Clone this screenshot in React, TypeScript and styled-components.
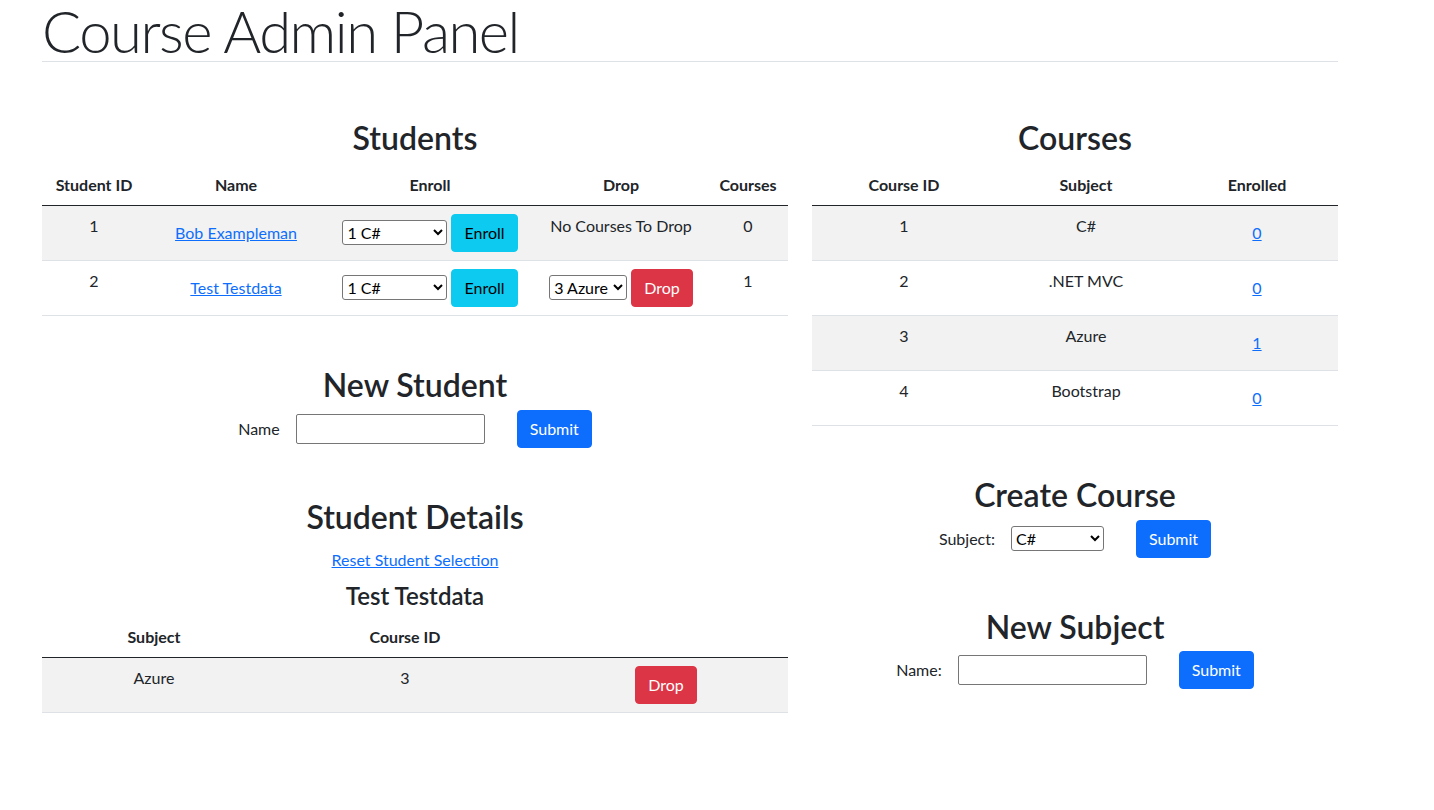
import React from "react";
import styled, { createGlobalStyle } from "styled-components";

const FONT = `Lato, "Open Sans", "Liberation Sans", sans-serif`;

const GlobalStyle = createGlobalStyle`
  * { box-sizing: border-box; }
  body {
    margin: 0;
    font-family: ${FONT};
    font-size: 16px;
    line-height: 1.5;
    color: #212529;
    background: #fff;
  }
`;

const Page = styled.div`
  width: 1296px;
  margin-left: 42px;
`;

const Title = styled.h1`
  margin: 0;
  font-size: 58px;
  font-weight: 300;
  letter-spacing: -1.5px;
  line-height: 61px;
  border-bottom: 1px solid #dee2e6;
`;

const Columns = styled.div`
  display: grid;
  grid-template-columns: 746px 526px;
  column-gap: 24px;
  margin-top: 57px;
`;

const Column = styled.div`
  display: flex;
  flex-direction: column;
  gap: 50px;
`;

const Section = styled.section`
  text-align: center;
`;

const Heading = styled.h2<{ $tight?: boolean }>`
  margin: 0 0 ${(p) => (p.$tight ? 5 : 8)}px;
  font-size: 32px;
  font-weight: 600;
  line-height: 38.4px;
`;

const SubHeading = styled.h4`
  margin: 3px 0 6px;
  font-size: 24px;
  font-weight: 600;
  line-height: 28.8px;
`;

const Table = styled.table`
  width: 100%;
  table-layout: fixed;
  border-collapse: collapse;
  text-align: center;
`;

const Th = styled.th<{ $w: number }>`
  width: ${(p) => p.$w}px;
  padding: 8px;
  font-weight: 700;
  vertical-align: bottom;
  border-bottom: 1px solid #212529;
`;

const Row = styled.tr`
  &:nth-child(odd) > td {
    background: #f2f2f2;
  }
`;

const Td = styled.td`
  padding: 8px;
  vertical-align: top;
  border-bottom: 1px solid #dee2e6;
`;

type Variant = "primary" | "info" | "danger" | "link";

const colors: Record<Variant, { bg: string; fg: string }> = {
  primary: { bg: "#0d6efd", fg: "#fff" },
  info: { bg: "#0dcaf0", fg: "#000" },
  danger: { bg: "#dc3545", fg: "#fff" },
  link: { bg: "transparent", fg: "#0d6efd" },
};

const Button = styled.button<{ $variant: Variant }>`
  display: inline-block;
  padding: 6px 12px;
  font-family: inherit;
  font-size: 16px;
  line-height: 24px;
  border: 1px solid ${(p) => (p.$variant === "link" ? "transparent" : colors[p.$variant].bg)};
  border-radius: 4px;
  background: ${(p) => colors[p.$variant].bg};
  color: ${(p) => colors[p.$variant].fg};
  text-decoration: ${(p) => (p.$variant === "link" ? "underline" : "none")};
  cursor: pointer;
`;

const Inline = styled.div`
  display: inline-flex;
  align-items: baseline;
  gap: 4px;
`;

const Select = styled.select<{ $w: number }>`
  width: ${(p) => p.$w}px;
  height: 25px;
  padding: 0;
  font-family: inherit;
  font-size: 16px;
  color: #000;
  background: #fff;
  border: 1px solid #767676;
  border-radius: 3px;
`;

const FormRow = styled.form`
  display: flex;
  justify-content: center;
  align-items: center;
`;

const Label = styled.label`
  margin-right: 16px;
`;

const TextInput = styled.input`
  width: 189px;
  height: 30px;
  padding: 1px 2px;
  font-family: inherit;
  font-size: 16px;
  border: 1px solid #767676;
  border-radius: 2px;
`;

const Spacer = styled.span`
  width: 32px;
`;

const courses = [
  { id: 1, subject: "C#", enrolled: 0 },
  { id: 2, subject: ".NET MVC", enrolled: 0 },
  { id: 3, subject: "Azure", enrolled: 1 },
  { id: 4, subject: "Bootstrap", enrolled: 0 },
];

const students = [
  { id: 1, name: "Bob Exampleman", courses: [] as number[] },
  { id: 2, name: "Test Testdata", courses: [3] },
];

const CourseOptions = () => (
  <>
    {courses.map((c) => (
      <option key={c.id}>
        {c.id} {c.subject}
      </option>
    ))}
  </>
);

export default function App() {
  return (
    <>
      <GlobalStyle />
      <Page>
        <Title>Course Admin Panel</Title>
        <Columns>
          <Column>
            <Section>
              <Heading>Students</Heading>
              <Table>
                <thead>
                  <tr>
                    <Th $w={104}>Student ID</Th>
                    <Th $w={180}>Name</Th>
                    <Th $w={208}>Enroll</Th>
                    <Th $w={174}>Drop</Th>
                    <Th $w={80}>Courses</Th>
                  </tr>
                </thead>
                <tbody>
                  {students.map((s) => (
                    <Row key={s.id}>
                      <Td>{s.id}</Td>
                      <Td>
                        <Button $variant="link">{s.name}</Button>
                      </Td>
                      <Td>
                        <Inline>
                          <Select $w={105}>
                            <CourseOptions />
                          </Select>
                          <Button $variant="info">Enroll</Button>
                        </Inline>
                      </Td>
                      <Td>
                        {s.courses.length === 0 ? (
                          "No Courses To Drop"
                        ) : (
                          <Inline>
                            <Select $w={78}>
                              {s.courses.map((id) => (
                                <option key={id}>
                                  {id} {courses[id - 1].subject}
                                </option>
                              ))}
                            </Select>
                            <Button $variant="danger">Drop</Button>
                          </Inline>
                        )}
                      </Td>
                      <Td>{s.courses.length}</Td>
                    </Row>
                  ))}
                </tbody>
              </Table>
            </Section>

            <Section>
              <Heading $tight>New Student</Heading>
              <FormRow>
                <Label>Name</Label>
                <TextInput type="text" />
                <Spacer />
                <Button $variant="primary" type="button">
                  Submit
                </Button>
              </FormRow>
            </Section>

            <Section>
              <Heading $tight>Student Details</Heading>
              <Button $variant="link">Reset Student Selection</Button>
              <SubHeading>Test Testdata</SubHeading>
              <Table>
                <thead>
                  <tr>
                    <Th $w={224}>Subject</Th>
                    <Th $w={278}>Course ID</Th>
                    <Th $w={244}></Th>
                  </tr>
                </thead>
                <tbody>
                  <Row>
                    <Td>Azure</Td>
                    <Td>3</Td>
                    <Td>
                      <Button $variant="danger">Drop</Button>
                    </Td>
                  </Row>
                </tbody>
              </Table>
            </Section>
          </Column>

          <Column>
            <Section>
              <Heading>Courses</Heading>
              <Table>
                <thead>
                  <tr>
                    <Th $w={184}>Course ID</Th>
                    <Th $w={180}>Subject</Th>
                    <Th $w={162}>Enrolled</Th>
                  </tr>
                </thead>
                <tbody>
                  {courses.map((c) => (
                    <Row key={c.id}>
                      <Td>{c.id}</Td>
                      <Td>{c.subject}</Td>
                      <Td>
                        <Button $variant="link">{c.enrolled}</Button>
                      </Td>
                    </Row>
                  ))}
                </tbody>
              </Table>
            </Section>

            <Section>
              <Heading $tight>Create Course</Heading>
              <FormRow>
                <Label>Subject:</Label>
                <Select $w={93}>
                  {courses.map((c) => (
                    <option key={c.id}>{c.subject}</option>
                  ))}
                </Select>
                <Spacer />
                <Button $variant="primary" type="button">
                  Submit
                </Button>
              </FormRow>
            </Section>

            <Section>
              <Heading $tight>New Subject</Heading>
              <FormRow>
                <Label>Name:</Label>
                <TextInput type="text" />
                <Spacer />
                <Button $variant="primary" type="button">
                  Submit
                </Button>
              </FormRow>
            </Section>
          </Column>
        </Columns>
      </Page>
    </>
  );
}
